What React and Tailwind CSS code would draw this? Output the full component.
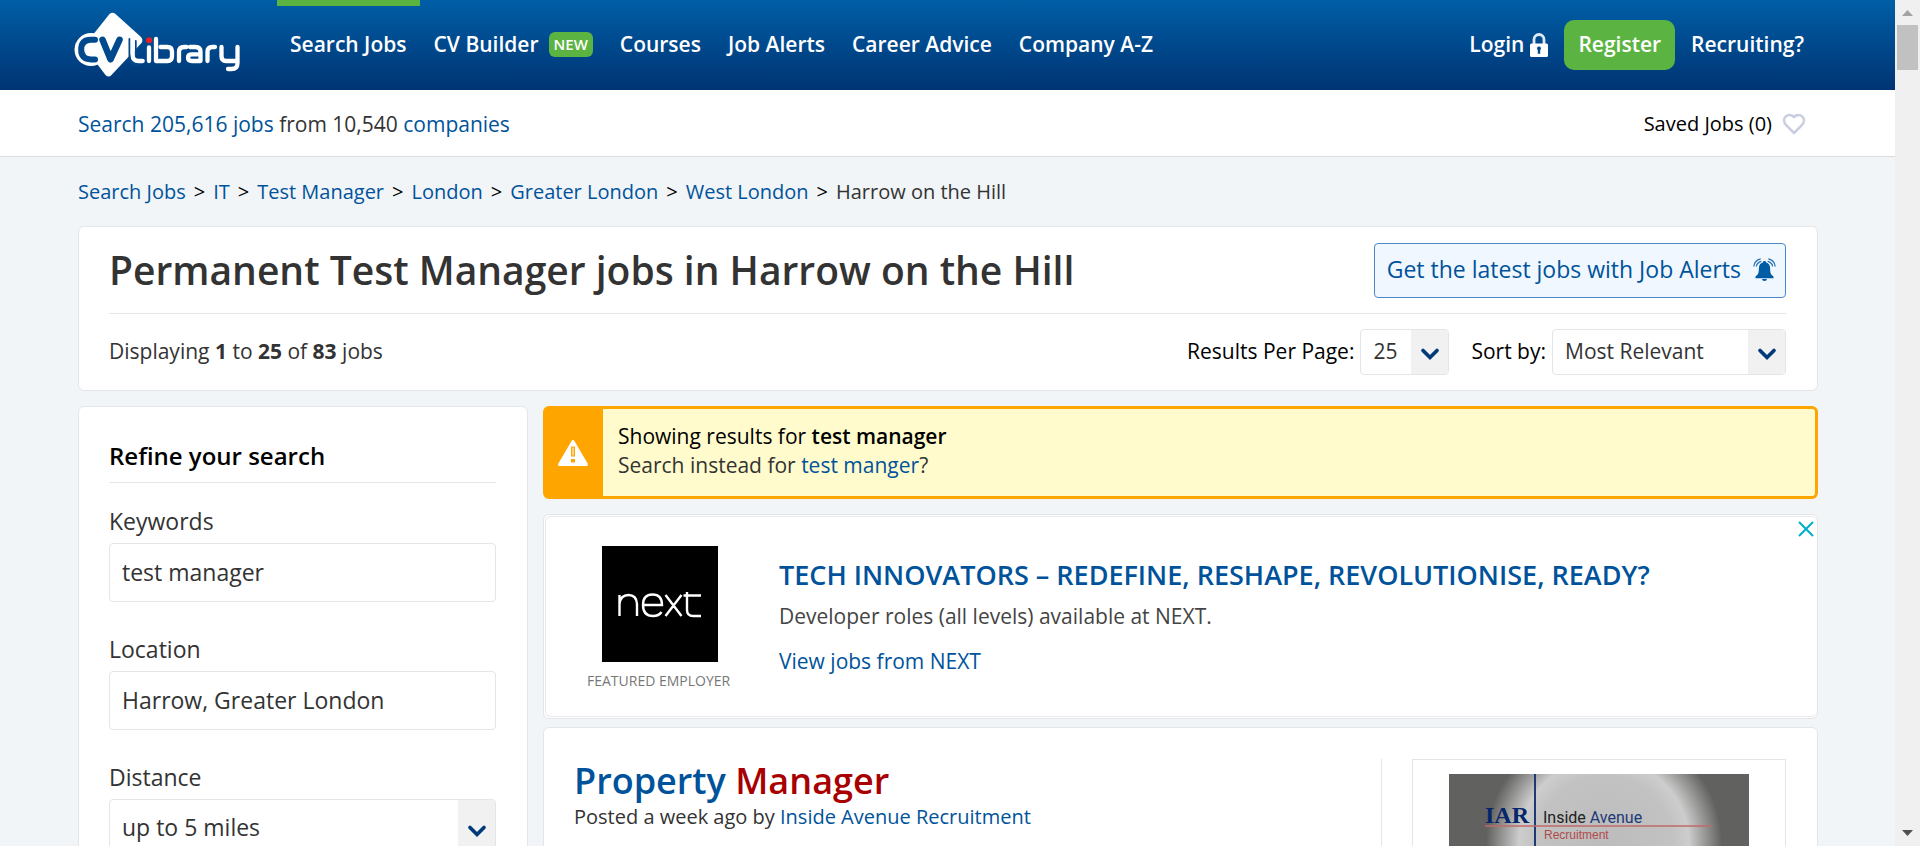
import { LuHeart } from 'react-icons/lu';

function Logo() {
  return (
    <svg viewBox="0 0 190 80" className="h-[80px] w-[190px]" fill="none" aria-label="CV-Library" role="img">
      <path d="M44.500 9q3-2.600 6 0L76 32q2.500 3 .5 6L46.500 70q-3 3-6 0L23 47V36z" fill="#fff" />
      <circle cx="26" cy="44.600" r="16.500" fill="#fff" />
      <path d="M30 34.800h-4q-9.800 0-9.800 9.800t9.800 9.800h4" stroke="#00498c" strokeWidth="6" strokeLinecap="round" />
      <path d="M37.500 34.800l8 19.500 9-19.500" stroke="#00498c" strokeWidth="6.500" strokeLinecap="round" strokeLinejoin="round" />
      <path d="M64.500 34v17q0 8.500 8 8.500" stroke="#00498c" strokeWidth="2" strokeLinecap="round" />
      <path d="M70.800 36v15" stroke="#00498c" strokeWidth="1.800" strokeLinecap="round" />
      <g stroke="#fff" strokeWidth="4.300" strokeLinecap="round" strokeLinejoin="round">
        <path d="M67.700 34v16q0 6 6 6h4" />
        <path d="M84 42.500V56" />
        <path d="M91 34v22h11.500q4.500 0 4.500-4.500v-5q0-4.500-4.500-4.500h-7" />
        <path d="M114 56v-9q0-5 5-5h2.500" />
        <path d="M125 42h5.500q5 0 5 5v9h-8.500q-4 0-4-3.300t4-3.300h5.500" />
        <path d="M142.500 56v-9q0-5 5-5h2.500" />
        <path d="M156.500 42v9.500q0 4.500 4.500 4.500h10M172.500 42v16q0 6-6 6h-3.500" />
      </g>
      <circle cx="84" cy="35.300" r="3" fill="#ee1c25" />
    </svg>
  );
}

function Lock() {
  return (
    <svg viewBox="0 0 18 24" className="h-6 w-[18px] shrink-0" aria-hidden="true">
      <path d="M4 12V6.500a5 5 0 0 1 10 0V12" fill="none" stroke="#dfe9f3" strokeWidth="2.800" />
      <rect y="10.500" width="18" height="13.500" rx="1.500" fill="#fff" />
      <path d="M9 13.500a2 2 0 0 1 1.200 3.600v3.700H7.800v-3.700A2 2 0 0 1 9 13.500z" fill="#00498c" />
    </svg>
  );
}

function Bell() {
  return (
    <svg viewBox="0 0 24 24" className="h-6 w-6 shrink-0" aria-hidden="true">
      <path d="M11.500 3c1 0 1.600.6 1.600 1.500 2.600.7 4 3 4 5.500 0 5.500 1 6.800 3.400 8.500v1.800h-18v-1.800C4.900 16.800 5.900 15.500 5.900 10c0-2.500 1.400-4.800 4-5.500 0-.9.600-1.500 1.600-1.500zM9 21h5a2.500 2 0 0 1-5 0z" fill="#005ca5" />
      <path d="M.8 8.500Q1.500 2.300 7.700.9M3.300 8.500Q4 4.500 8.300 3.400M22.200 8.500Q21.500 2.300 15.300.9M19.700 8.500Q19 4.500 14.700 3.400" fill="none" stroke="#2a74b4" strokeWidth="1.300" />
    </svg>
  );
}

function Caret() {
  return (
    <span className="pointer-events-none absolute inset-y-px right-px flex w-[37px] items-center justify-center rounded-r bg-[#f1f1f1] pt-1">
      <svg viewBox="0 0 20 14" className="h-3.5 w-5" fill="none" aria-hidden="true">
        <path d="M3 3.500l7 7 7-7" stroke="#003a78" strokeWidth="3.700" strokeLinecap="round" />
      </svg>
    </span>
  );
}

function Select({ id, value, box, className }) {
  return (
    <div className={`relative ${box}`}>
      <select id={id} defaultValue={value} className={`w-full appearance-none rounded border border-[#e3e5e8] bg-white pl-3 text-[#333] ${className}`}>
        <option>{value}</option>
      </select>
      <Caret />
    </div>
  );
}

const navItems = ['Search Jobs', 'CV Builder', 'Courses', 'Job Alerts', 'Career Advice', 'Company A-Z'];

function Header() {
  return (
    <header className="flex h-[90px] items-start justify-between bg-linear-to-b from-[#005ea6] to-[#003474] pr-[91px] pl-[65px] text-[21px] font-semibold text-white">
      <div className="flex">
        <a href="#home" className="pt-[5px]"><Logo /></a>
        <nav className="ml-[22px] flex gap-px">
          {navItems.map((item, i) => (
            <a key={item} href="#nav" className={`flex h-[83px] items-center border-t-[6px] px-[13px] ${i === 0 ? 'border-[#5bb442]' : 'border-transparent'}`}>
              {item}
              {item === 'CV Builder' && <span className="ml-2.5 rounded-md bg-[#5bb442] px-[5px] text-[15px] leading-[25px]">NEW</span>}
            </a>
          ))}
        </nav>
      </div>
      <div className="flex items-center pt-5">
        <a href="#login" className="mr-4 flex items-center gap-1.5 pb-px">Login <Lock /></a>
        <a href="#register" className="mr-4 rounded-[10px] bg-[#5bb442] px-3.5 pb-px leading-[49px]">Register</a>
        <a href="#recruiting" className="pb-px">Recruiting?</a>
      </div>
    </header>
  );
}

const crumbs = ['Search Jobs', 'IT', 'Test Manager', 'London', 'Greater London', 'West London'];

function Field({ id, label, children }) {
  return (
    <div className="mb-[31px]">
      <label htmlFor={id} className="mb-[6px] block text-[23px] leading-8 text-[#333]">{label}</label>
      {children}
    </div>
  );
}

function Sidebar() {
  const input = 'h-[59px] w-full rounded border border-[#e3e5e8] bg-white px-3 pb-0.5 text-[23px] text-[#333]';
  return (
    <aside className="w-[450px] shrink-0 rounded-md border border-[#e3e5e8] bg-white pt-[31px] pr-[31px] pl-[30px]">
      <h2 className="mb-[22px] border-b border-[#e3e5e8] pb-2 text-2xl leading-9 font-semibold text-black">Refine your search</h2>
      <Field id="keywords" label="Keywords"><input id="keywords" defaultValue="test manager" className={input} /></Field>
      <Field id="location" label="Location"><input id="location" defaultValue="Harrow, Greater London" className={input} /></Field>
      <Field id="distance" label="Distance"><Select id="distance" value="up to 5 miles" box="w-full" className="h-[59px] pb-0.5 text-[23px]" /></Field>
    </aside>
  );
}

function Notice() {
  return (
    <section className="flex h-[93px] rounded-md border-[3px] border-[#ffa500] bg-[#fffbcc]">
      <div className="flex w-[57px] items-center justify-center bg-[#ffa500] pr-1">
        <svg viewBox="0 0 32 28" className="h-7 w-8" aria-hidden="true">
          <path d="M16 2.500L29.500 25.500h-27z" fill="#fff" stroke="#fff" strokeWidth="3" strokeLinejoin="round" />
          <path d="M14 7.500h4v10h-4zM14 20h4v3.500h-4z" fill="#ffa500" />
          <path d="M15.500 8.500h1v8h-1z" fill="#fff" />
        </svg>
      </div>
      <div className="px-[15px] pt-[13px] text-[21px] leading-[29px]">
        <p className="text-black">Showing results for <b className="font-semibold">test manager</b></p>
        <p className="text-[#333]">Search instead for <a href="#alt" className="text-[#00539b]">test manger</a>?</p>
      </div>
    </section>
  );
}

function Banner() {
  return (
    <section className="relative mt-[15px] rounded-md border border-[#e3e5e8] bg-white py-px pl-px">
      <div className="flex h-[201px] rounded-md border-y border-l border-[#e9e9ee] pt-[29px] pl-[41px]">
        <div className="w-[142px]">
          <svg viewBox="0 0 116 116" className="ml-[15px] h-[116px] w-[116px]" fill="none" role="img" aria-label="next">
            <path fill="#000" d="M0 0h116v116H0z" />
            <path d="M17.500 70V49M17.500 58q1-9 9-9t8.500 9v12M41 59h19q0-10.500-9.500-10.500T41 59q0 11 10 11 6 0 8.500-4M63.500 49L79.500 70M79.500 49L63.500 70M85 46v18q0 6 6 6h8M81.500 49.500H99" stroke="#fff" strokeWidth="2.400" />
          </svg>
          <p className="mt-2 text-sm leading-[21px] whitespace-nowrap text-[#777]">FEATURED EMPLOYER</p>
        </div>
        <div className="ml-[50px] pt-[11px]">
          <h2 className="text-[27px] leading-9 font-semibold text-[#00539b]">TECH INNOVATORS – REDEFINE, RESHAPE, REVOLUTIONISE, READY?</h2>
          <p className="mt-[7px] text-[21px] leading-8 text-[#444]">Developer roles (all levels) available at NEXT.</p>
          <a href="#next" className="mt-[13px] block text-[21px] leading-8 text-[#00539b]">View jobs from NEXT</a>
        </div>
      </div>
      <button aria-label="Close" className="absolute top-[5px] right-0.5">
        <svg viewBox="0 0 18 18" className="h-[18px] w-[18px]" aria-hidden="true"><path d="M2 2l14 14M16 2L2 16" stroke="#00aecd" strokeWidth="2" /></svg>
      </button>
    </section>
  );
}

function AgencyLogo() {
  return (
    <svg viewBox="0 0 300 150" className="h-[150px] w-[300px]" role="img" aria-label="Inside Avenue Recruitment">
      <defs>
        <radialGradient id="disc" gradientUnits="userSpaceOnUse" cx="155" cy="70" r="118">
          <stop offset="0" stopColor="#bcbcbc" />
          <stop offset=".58" stopColor="#c2c2c2" />
          <stop offset=".72" stopColor="#cdcdcd" />
          <stop offset="1" stopColor="#61615f" />
        </radialGradient>
      </defs>
      <path fill="url(#disc)" d="M0 0h300v150H0z" />
      <path d="M86 0v150" stroke="#1d3a77" strokeWidth="2" />
      <path d="M36 52h226" stroke="#c0696a" strokeWidth="1.500" />
      <text x="36" y="49" fontSize="24" className="font-['Liberation_Serif',serif] font-bold" fill="#06266b">IAR</text>
      <text x="94" y="49" fontSize="16" className="font-['Roboto',sans-serif]" fill="#222">
        Inside <tspan fill="#1d3a77">Avenue</tspan>
      </text>
      <text x="95" y="65" fontSize="12" className="font-['Liberation_Sans',sans-serif]" fill="#b04a4c">Recruitment</text>
    </svg>
  );
}

function Result() {
  return (
    <article className="mt-2 flex h-[400px] rounded-md border border-[#e3e5e8] bg-white py-[31px] pr-[31px] pl-[30px]">
      <div className="grow border-r border-[#e3e5e8]">
        <h2 className="text-[36px] leading-[44px] font-semibold text-[#00539b]">Property <span className="text-[#a80000]">Manager</span></h2>
        <p className="text-xl leading-7 text-[#333]">Posted a week ago by <a href="#agency" className="text-[#00539b]">Inside Avenue Recruitment</a></p>
      </div>
      <div className="ml-[30px] flex w-[374px] justify-center border border-[#e3e5e8] pt-3.5">
        <AgencyLogo />
      </div>
    </article>
  );
}

function Scrollbar() {
  return (
    <div className="flex w-[25px] shrink-0 flex-col items-center justify-between bg-[#f0f0f0]" aria-hidden="true">
      <div className="flex flex-col items-center">
        <svg viewBox="0 0 25 25" className="h-[25px] w-[25px]"><path d="M12.500 10l5.500 6H7z" fill="#a3a3a3" /></svg>
        <div className="h-[45px] w-[21px] bg-[#c1c1c1]" />
      </div>
      <svg viewBox="0 0 25 25" className="h-[25px] w-[25px]"><path d="M12.500 15L7 9h11z" fill="#505050" /></svg>
    </div>
  );
}

export default function App() {
  return (
    <div className="flex h-screen overflow-hidden bg-[#f1f5f8] font-['Open_Sans',sans-serif]">
      <div className="min-w-0 grow overflow-hidden">
        <Header />
        <div className="flex h-[67px] items-center justify-between border-b border-[#dcdcdc] bg-white pt-0.5 pr-[89px] pl-[78px] text-[21px]">
          <p className="pt-0.5 text-[#333]"><a href="#all" className="text-[#00539b]">Search 205,616 jobs</a> from 10,540 <a href="#co" className="text-[#00539b]">companies</a></p>
          <a href="#saved" className="flex items-center gap-2.5 text-xl text-black">Saved Jobs (0) <LuHeart className="h-6 w-6 text-[#c9cfe0]" strokeWidth={2.500} /></a>
        </div>
        <main className="pr-[77px] pl-[78px]">
          <nav aria-label="Breadcrumb" className="flex h-[69px] items-center gap-2 text-xl text-[#00539b]">
            {crumbs.map((c) => [<a key={c} href="#crumb">{c}</a>, <span key={`${c}-sep`} className="text-black">&gt;</span>])}
            <span className="text-[#333]">Harrow on the Hill</span>
          </nav>
          <section className="rounded-md border border-[#e3e5e8] bg-white pr-[31px] pl-[30px]">
            <div className="flex items-center justify-between border-b border-[#e3e5e8] pt-4 pb-[15px]">
              <h1 className="pb-0.5 text-[39px] leading-[50px] font-semibold text-[#333]">Permanent Test Manager jobs in Harrow on the Hill</h1>
              <button className="flex h-[55px] items-center gap-3 rounded border border-[#4a8acb] bg-[#f0f7ff] pr-2 pb-0.5 pl-3 text-[23px] text-[#00539b]">Get the latest jobs with Job Alerts <Bell /></button>
            </div>
            <div className="flex h-[76px] items-center justify-between text-[21px]">
              <p className="text-[#333]">Displaying <b>1</b> to <b>25</b> of <b>83</b> jobs</p>
              <div className="flex items-center text-black">
                <label htmlFor="per-page" className="mr-1.5">Results Per Page:</label>
                <Select id="per-page" value="25" box="w-[89px]" className="h-[46px]" />
                <label htmlFor="sort" className="mr-1.5 ml-[22px]">Sort by:</label>
                <Select id="sort" value="Most Relevant" box="w-[234px]" className="h-[46px]" />
              </div>
            </div>
          </section>
          <div className="mt-[15px] flex gap-[15px]">
            <Sidebar />
            <div className="min-w-0 grow">
              <Notice />
              <Banner />
              <Result />
            </div>
          </div>
        </main>
      </div>
      <Scrollbar />
    </div>
  );
}
